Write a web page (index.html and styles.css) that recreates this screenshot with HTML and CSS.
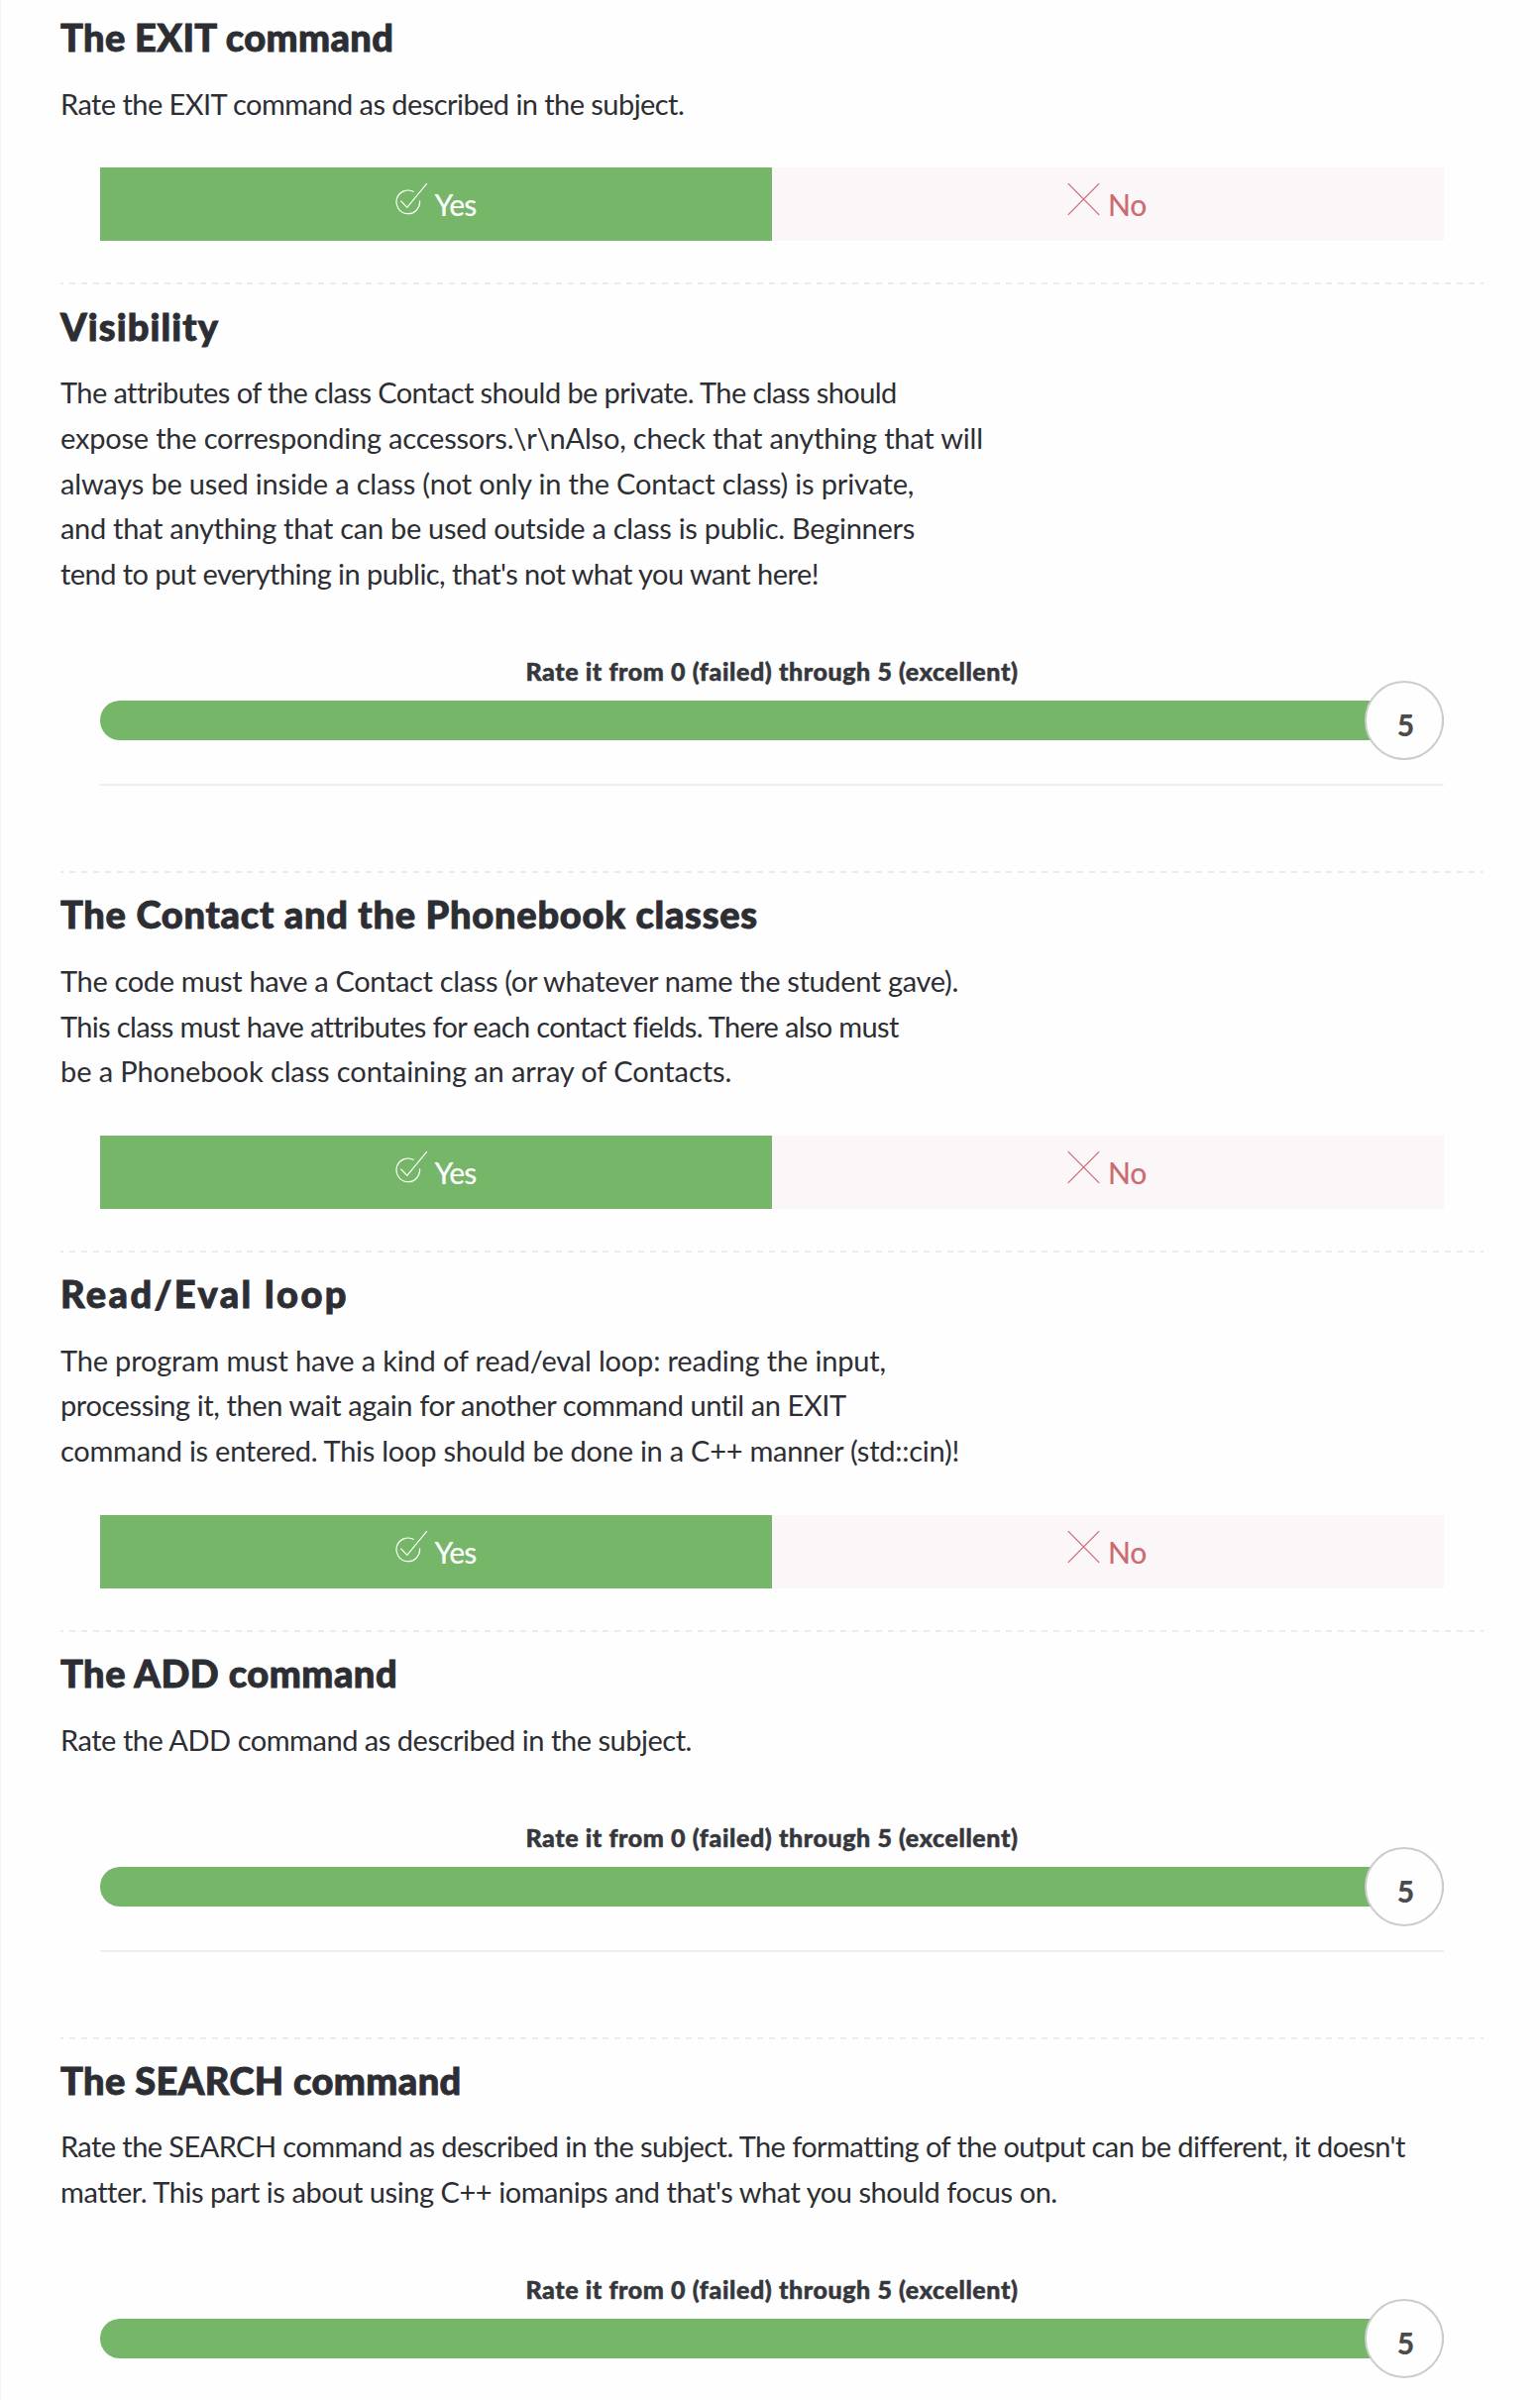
FILE: index.html
```html
<!DOCTYPE html>
<html lang="en">
<head>
<meta charset="utf-8">
<title>Evaluation</title>
<link rel="stylesheet" href="styles.css">
</head>
<body>
<svg class="defs" width="0" height="0">
  <symbol id="check" viewBox="0 0 39 48">
    <path d="M18.6 11.6A11.8 11.8 0 1 0 24.5 20.3" />
    <path d="M5.4 20.6L11.8 27.4L31.8 3.2" />
  </symbol>
  <symbol id="cross" viewBox="0 0 42 48">
    <path d="M.8 3.2L32.2 34.8M32.2 3.2L.8 34.8" />
  </symbol>
</svg>
<main class="sheet">
  <section class="item">
    <h2 class="title t-exit">The EXIT command</h2>
    <p class="text"><span class="line s-56">Rate the EXIT command as described in the subject.</span></p>
    <div class="choice">
      <div class="option yes"><svg width="39" height="48"><use href="#check"/></svg><span>Yes</span></div>
      <div class="option no"><svg width="42" height="48"><use href="#cross"/></svg><span>No</span></div>
    </div>
  </section>

  <section class="item">
    <h2 class="title t-visibility">Visibility</h2>
    <p class="text">
      <span class="line s-58">The attributes of the class Contact should be private. The class should</span>
      <span class="line s-20">expose the corresponding accessors.\r\nAlso, check that anything that will</span>
      <span class="line s-17">always be used inside a class (not only in the Contact class) is private,</span>
      <span class="line s-29">and that anything that can be used outside a class is public. Beginners</span>
      <span class="line s-54">tend to put everything in public, that's not what you want here!</span>
    </p>
    <div class="rating">
      <div class="label">Rate it from 0 (failed) through 5 (excellent)</div>
      <div class="track"><div class="handle">5</div></div>
    </div>
  </section>

  <section class="item">
    <h2 class="title t-classes">The Contact and the Phonebook classes</h2>
    <p class="text">
      <span class="line s-34">The code must have a Contact class (or whatever name the student gave).</span>
      <span class="line s-65">This class must have attributes for each contact fields. There also must</span>
      <span class="line s-11">be a Phonebook class containing an array of Contacts.</span>
    </p>
    <div class="choice">
      <div class="option yes"><svg width="39" height="48"><use href="#check"/></svg><span>Yes</span></div>
      <div class="option no"><svg width="42" height="48"><use href="#cross"/></svg><span>No</span></div>
    </div>
  </section>

  <section class="item">
    <h2 class="title t-loop">Read/Eval loop</h2>
    <p class="text">
      <span class="line s-17">The program must have a kind of read/eval loop: reading the input,</span>
      <span class="line s-41">processing it, then wait again for another command until an EXIT</span>
      <span class="line s-26">command is entered. This loop should be done in a C++ manner (std::cin)!</span>
    </p>
    <div class="choice">
      <div class="option yes"><svg width="39" height="48"><use href="#check"/></svg><span>Yes</span></div>
      <div class="option no"><svg width="42" height="48"><use href="#cross"/></svg><span>No</span></div>
    </div>
  </section>

  <section class="item">
    <h2 class="title t-add">The ADD command</h2>
    <p class="text"><span class="line s-47">Rate the ADD command as described in the subject.</span></p>
    <div class="rating">
      <div class="label">Rate it from 0 (failed) through 5 (excellent)</div>
      <div class="track"><div class="handle">5</div></div>
    </div>
  </section>

  <section class="item">
    <h2 class="title t-search">The SEARCH command</h2>
    <p class="text">
      <span class="line s-58">Rate the SEARCH command as described in the subject. The formatting of the output can be different, it doesn't</span>
      <span class="line s-45">matter. This part is about using C++ iomanips and that's what you should focus on.</span>
    </p>
    <div class="rating">
      <div class="label">Rate it from 0 (failed) through 5 (excellent)</div>
      <div class="track"><div class="handle">5</div></div>
    </div>
  </section>
</main>
</body>
</html>
```
FILE: styles.css
```css
* { box-sizing: border-box; }

html { height: 100%; overflow: hidden; }

body {
  height: 2422px;
  margin: 0;
  overflow: hidden;
  background: #fefefe;
  color: #2d2e33;
  font-family: Lato, "Open Sans", sans-serif;
}

.defs { display: block; }

.sheet {
  display: flow-root;
  height: 2422px;
  padding: 0 57px 0 60px;
  border-left: 1px solid #f6f6f6;
}

.item {
  padding-top: 20.3px;
  background: repeating-linear-gradient(90deg, #ebebeb 0 3px, transparent 3px 8.967px, #ebebeb 8.967px 11.967px) 0 0 / 100% 2px no-repeat;
}

.item:first-child { margin-top: -6px; }

.title {
  margin: 0 0 21.6px;
  font-size: 38px;
  font-weight: 900;
  line-height: 46px;
  white-space: nowrap;
  -webkit-text-stroke: 0.9px currentColor;
}

.t-exit { letter-spacing: 0.37px; }
.t-visibility { letter-spacing: 1.11px; }
.t-classes { letter-spacing: 0.73px; }
.t-loop { letter-spacing: 2.4px; }
.t-add { letter-spacing: 0.5px; }
.t-search { letter-spacing: 0.4px; }

.text {
  margin: 0;
  font-size: 29px;
  line-height: 45.7px;
}

.line { display: block; white-space: nowrap; }

.s-11 { letter-spacing: -0.11px; }
.s-17 { letter-spacing: -0.17px; }
.s-20 { letter-spacing: -0.2px; }
.s-26 { letter-spacing: -0.26px; }
.s-29 { letter-spacing: -0.29px; }
.s-34 { letter-spacing: -0.34px; }
.s-41 { letter-spacing: -0.41px; }
.s-45 { letter-spacing: -0.45px; }
.s-47 { letter-spacing: -0.47px; }
.s-54 { letter-spacing: -0.54px; }
.s-56 { letter-spacing: -0.56px; }
.s-58 { letter-spacing: -0.58px; }
.s-65 { letter-spacing: -0.65px; }

.choice {
  display: grid;
  grid-template-columns: 1fr 1fr;
  height: 74px;
  margin: 41.85px 40px 42px;
}

.option {
  display: flex;
  align-items: center;
  justify-content: center;
  font-size: 30px;
  font-weight: 500;
  line-height: 36px;
  letter-spacing: -0.8px;
}

.option svg { fill: none; stroke: currentColor; stroke-width: 1.2; }

.yes { background: #76b668; color: #fff; }
.no { padding-right: 2px; background: #fbf7f9; color: #cb6b72; }
.no span { margin-left: -1px; letter-spacing: -0.3px; }

.rating {
  margin: 60.2px 40px 86px;
  padding-bottom: 44px;
  border-bottom: 2px solid #eee;
}

.label {
  margin-bottom: 15px;
  color: #36373c;
  font-size: 25px;
  font-weight: 900;
  line-height: 30px;
  letter-spacing: 0.6px;
  text-align: center;
  -webkit-text-stroke: 0.5px currentColor;
}

.track {
  display: flex;
  align-items: center;
  justify-content: flex-end;
  height: 40px;
  border-radius: 20px;
  background: #76b668;
}

.handle {
  flex: none;
  width: 80px;
  height: 80px;
  padding-left: 3px;
  border: 2px solid #ccc;
  border-radius: 50%;
  background: #fefefe;
  color: #4b4b4b;
  font-size: 30px;
  font-weight: 900;
  line-height: 85px;
  text-align: center;
}
```
